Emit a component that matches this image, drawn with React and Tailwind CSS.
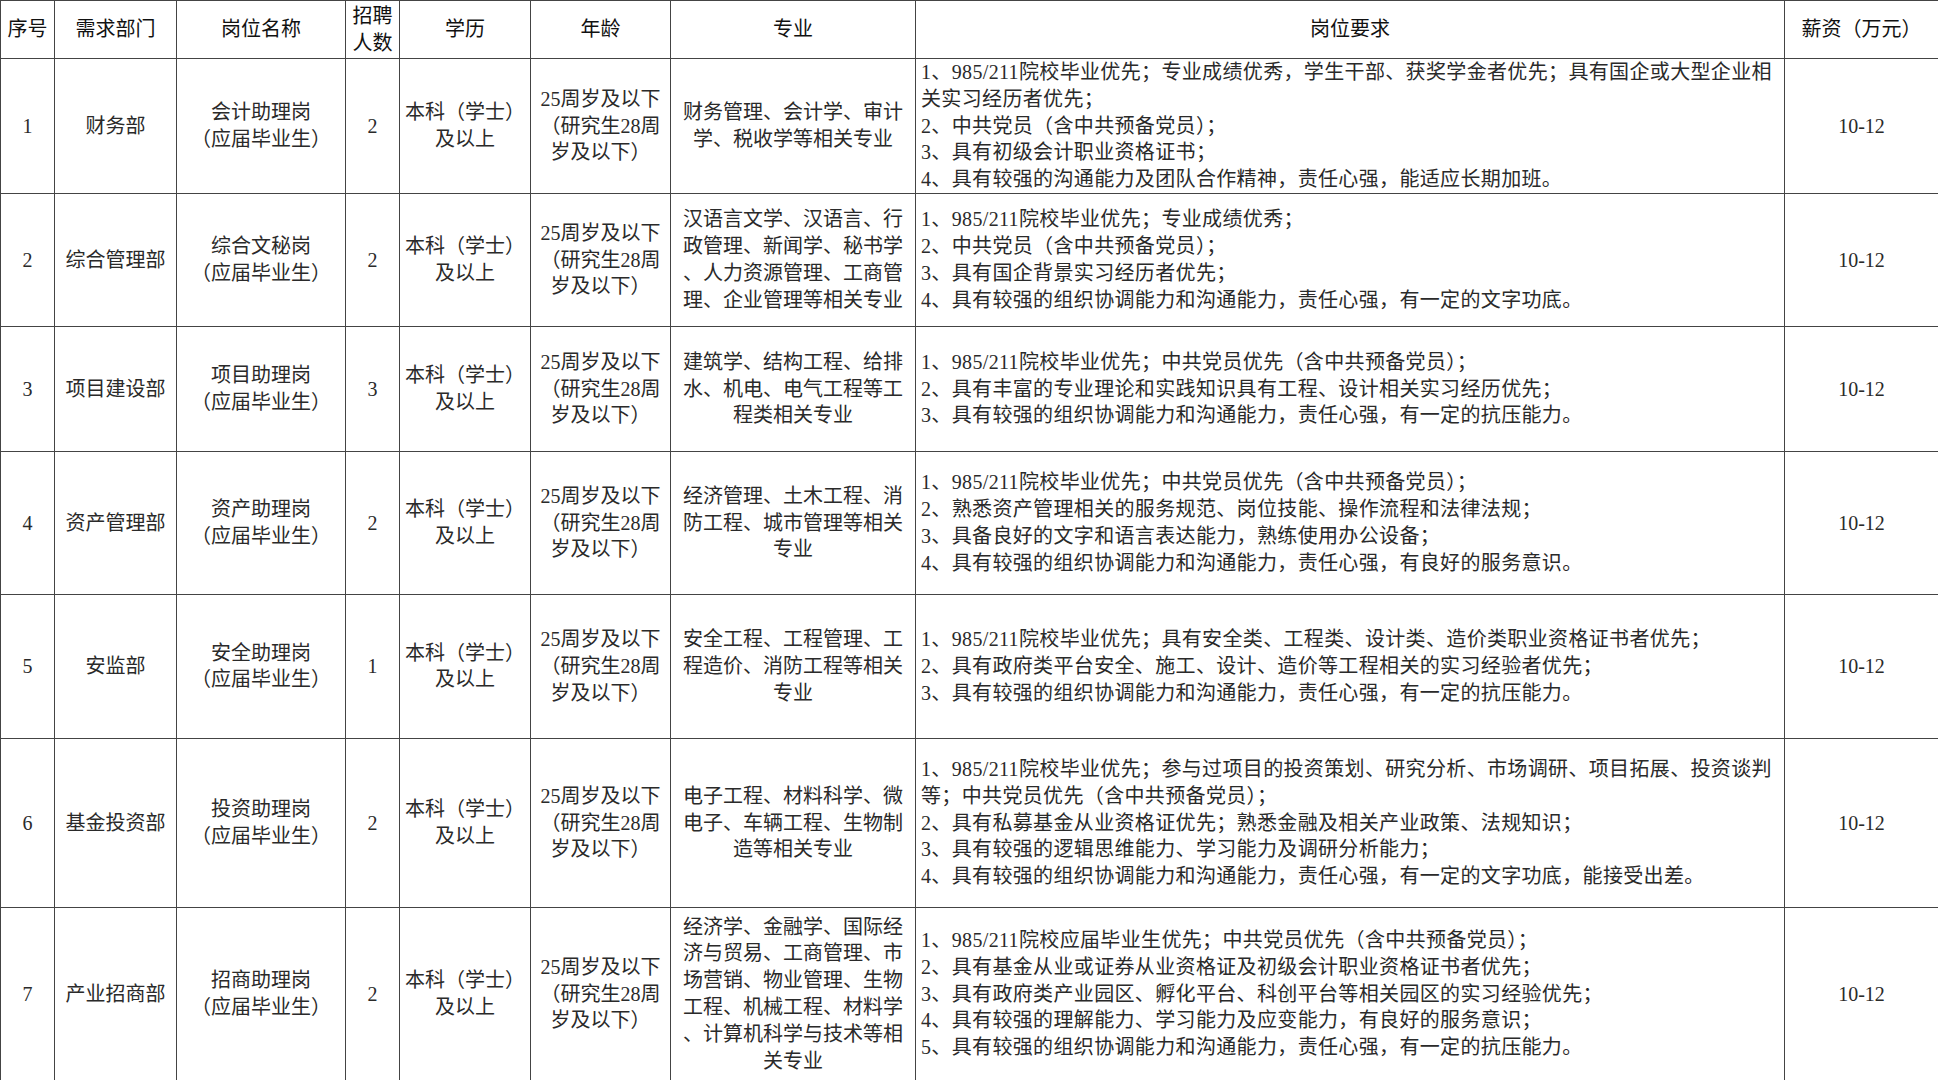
import React from 'react';

const headers = [
  ['序号'],
  ['需求部门'],
  ['岗位名称'],
  ['招聘', '人数'],
  ['学历'],
  ['年龄'],
  ['专业'],
  ['岗位要求'],
  ['薪资（万元）'],
];

const widths = [54, 122, 169, 54, 131, 140, 245, 869, 154];

const rows = [
  {
    h: 'h-[134px]',
    no: '1',
    dept: '财务部',
    post: '会计助理岗',
    count: '2',
    major: ['财务管理、会计学、审计', '学、税收学等相关专业'],
    req: [
      '1、985/211院校毕业优先；专业成绩优秀，学生干部、获奖学金者优先；具有国企或大型企业相',
      '关实习经历者优先；',
      '2、中共党员（含中共预备党员）；',
      '3、具有初级会计职业资格证书；',
      '4、具有较强的沟通能力及团队合作精神，责任心强，能适应长期加班。',
    ],
  },
  {
    h: 'h-[133px]',
    no: '2',
    dept: '综合管理部',
    post: '综合文秘岗',
    count: '2',
    major: ['汉语言文学、汉语言、行', '政管理、新闻学、秘书学', '、人力资源管理、工商管', '理、企业管理等相关专业'],
    req: [
      '1、985/211院校毕业优先；专业成绩优秀；',
      '2、中共党员（含中共预备党员）；',
      '3、具有国企背景实习经历者优先；',
      '4、具有较强的组织协调能力和沟通能力，责任心强，有一定的文字功底。',
    ],
  },
  {
    h: 'h-[125px]',
    no: '3',
    dept: '项目建设部',
    post: '项目助理岗',
    count: '3',
    major: ['建筑学、结构工程、给排', '水、机电、电气工程等工', '程类相关专业'],
    req: [
      '1、985/211院校毕业优先；中共党员优先（含中共预备党员）；',
      '2、具有丰富的专业理论和实践知识具有工程、设计相关实习经历优先；',
      '3、具有较强的组织协调能力和沟通能力，责任心强，有一定的抗压能力。',
    ],
  },
  {
    h: 'h-[143px]',
    no: '4',
    dept: '资产管理部',
    post: '资产助理岗',
    count: '2',
    major: ['经济管理、土木工程、消', '防工程、城市管理等相关', '专业'],
    req: [
      '1、985/211院校毕业优先；中共党员优先（含中共预备党员）；',
      '2、熟悉资产管理相关的服务规范、岗位技能、操作流程和法律法规；',
      '3、具备良好的文字和语言表达能力，熟练使用办公设备；',
      '4、具有较强的组织协调能力和沟通能力，责任心强，有良好的服务意识。',
    ],
  },
  {
    h: 'h-[144px]',
    no: '5',
    dept: '安监部',
    post: '安全助理岗',
    count: '1',
    major: ['安全工程、工程管理、工', '程造价、消防工程等相关', '专业'],
    req: [
      '1、985/211院校毕业优先；具有安全类、工程类、设计类、造价类职业资格证书者优先；',
      '2、具有政府类平台安全、施工、设计、造价等工程相关的实习经验者优先；',
      '3、具有较强的组织协调能力和沟通能力，责任心强，有一定的抗压能力。',
    ],
  },
  {
    h: 'h-[169px]',
    no: '6',
    dept: '基金投资部',
    post: '投资助理岗',
    count: '2',
    major: ['电子工程、材料科学、微', '电子、车辆工程、生物制', '造等相关专业'],
    req: [
      '1、985/211院校毕业优先；参与过项目的投资策划、研究分析、市场调研、项目拓展、投资谈判',
      '等；中共党员优先（含中共预备党员）；',
      '2、具有私募基金从业资格证优先；熟悉金融及相关产业政策、法规知识；',
      '3、具有较强的逻辑思维能力、学习能力及调研分析能力；',
      '4、具有较强的组织协调能力和沟通能力，责任心强，有一定的文字功底，能接受出差。',
    ],
  },
  {
    h: 'h-[173px]',
    no: '7',
    dept: '产业招商部',
    post: '招商助理岗',
    count: '2',
    major: [
      '经济学、金融学、国际经',
      '济与贸易、工商管理、市',
      '场营销、物业管理、生物',
      '工程、机械工程、材料学',
      '、计算机科学与技术等相',
      '关专业',
    ],
    req: [
      '1、985/211院校应届毕业生优先；中共党员优先（含中共预备党员）；',
      '2、具有基金从业或证券从业资格证及初级会计职业资格证书者优先；',
      '3、具有政府类产业园区、孵化平台、科创平台等相关园区的实习经验优先；',
      '4、具有较强的理解能力、学习能力及应变能力，有良好的服务意识；',
      '5、具有较强的组织协调能力和沟通能力，责任心强，有一定的抗压能力。',
    ],
  },
];

function Lines({ items }) {
  return items.map((t, i) => (
    <span key={i} className="block whitespace-nowrap">
      {t}
    </span>
  ));
}

const cell = 'border border-[#444] p-0 align-middle text-center';

export default function App() {
  return (
    <div className="min-h-screen bg-white font-['Liberation_Serif','Noto_Sans_CJK_SC',serif] text-[20px] leading-[26.8px] text-[#2a2a2a]">
      <table className="w-[1938px] table-fixed border-collapse">
        <colgroup>
          {widths.map((w, i) => (
            <col key={i} style={{ width: w }} />
          ))}
        </colgroup>
        <thead>
          <tr className="h-[58px] text-[#111]">
            {headers.map((h, i) => (
              <th key={i} className={`${cell} font-normal`}>
                <Lines items={h} />
              </th>
            ))}
          </tr>
        </thead>
        <tbody>
          {rows.map((r) => (
            <tr key={r.no} className={r.h}>
              <td className={cell}>{r.no}</td>
              <td className={cell}>{r.dept}</td>
              <td className={cell}>
                <Lines items={[r.post, '（应届毕业生）']} />
              </td>
              <td className={cell}>{r.count}</td>
              <td className={cell}>
                <Lines items={['本科（学士）', '及以上']} />
              </td>
              <td className={cell}>
                <Lines items={['25周岁及以下', '（研究生28周', '岁及以下）']} />
              </td>
              <td className={cell}>
                <Lines items={r.major} />
              </td>
              <td className={`${cell} !text-left pl-[5px] tracking-[0.35px]`}>
                <Lines items={r.req} />
              </td>
              <td className={cell}>10-12</td>
            </tr>
          ))}
        </tbody>
      </table>
    </div>
  );
}
